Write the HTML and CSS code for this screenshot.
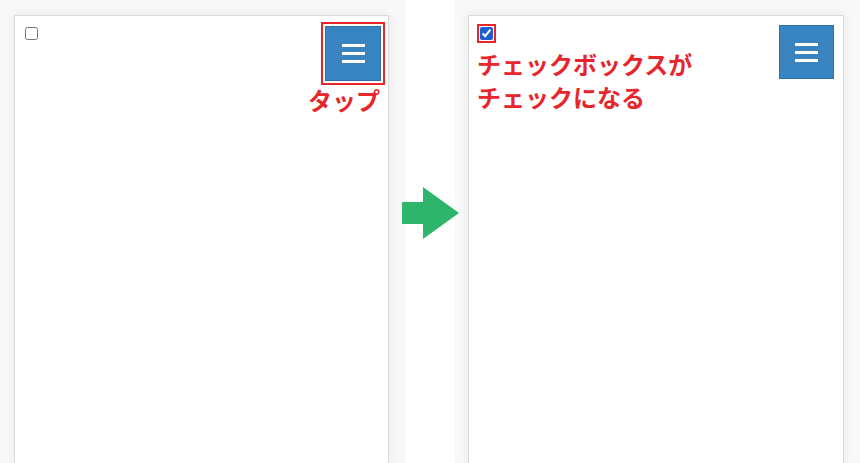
FILE: index.html
```html
<!DOCTYPE html>
<html lang="ja">
<head>
<meta charset="utf-8">
<title>チェックボックス</title>
<link rel="stylesheet" href="styles.css">
</head>
<body>
<div class="stage">
  <div class="shot shot-left">
    <div class="panel panel-left">
      <input type="checkbox" class="check">
      <div class="tap-col">
        <button class="menu-btn highlight-btn" type="button" aria-label="menu">
          <span class="bar"></span><span class="bar"></span><span class="bar"></span>
        </button>
        <div class="note note-tap">タップ</div>
      </div>
    </div>
  </div>
  <div class="gap">
    <svg class="arrow" width="62" height="56" viewBox="0 0 62 56" aria-hidden="true">
      <polygon points="2,17 23,17 23,2 59,28 23,54 23,39 2,39" fill="#2cb56b"/>
    </svg>
  </div>
  <div class="shot shot-right">
    <div class="panel panel-right">
      <div class="text-col">
        <input type="checkbox" class="check check-on highlight" checked>
        <div class="note note-done">チェックボックスが<br>チェックになる</div>
      </div>
      <button class="menu-btn" type="button" aria-label="menu">
        <span class="bar"></span><span class="bar"></span><span class="bar"></span>
      </button>
    </div>
  </div>
</div>
</body>
</html>
```

FILE: styles.css
```css
html, body {
  margin: 0;
  padding: 0;
  background: #ffffff;
}

.stage {
  display: flex;
  width: 860px;
  height: 463px;
  overflow: hidden;
  font-family: "Noto Sans CJK JP", "Noto Sans", sans-serif;
}

.shot {
  display: flex;
  box-sizing: border-box;
  height: 463px;
  background: #f8f8f8;
  padding-top: 15px;
}

.shot-left {
  width: 405px;
  padding-left: 14px;
  padding-right: 16px;
}

.shot-right {
  width: 405px;
  padding-left: 13px;
  padding-right: 16px;
}

.gap {
  width: 50px;
  position: relative;
  background: #ffffff;
}

.arrow {
  position: absolute;
  left: -5px;
  top: 185px;
  z-index: 2;
}

.panel {
  flex: 1;
  display: flex;
  justify-content: space-between;
  align-items: flex-start;
  background: #ffffff;
  border: 1px solid #dadada;
  border-bottom: none;
  box-shadow: 0 0 10px rgba(0, 0, 0, 0.07);
}

.panel-left {
  padding: 10px 7px 0 10px;
}

.panel-right {
  padding: 9px 9px 0 8px;
}

.check {
  width: 13px;
  height: 13px;
  margin: 0;
}

.panel-left .check {
  margin-top: 1px;
}

.check-on {
  margin: 2px 0 0 3px;
  accent-color: #1b5fd1;
}

.highlight {
  outline: 2px solid #e6262b;
  outline-offset: 1px;
}

.highlight-btn {
  outline: 2px solid #e6262b;
  outline-offset: 2px;
}

.tap-col {
  display: flex;
  flex-direction: column;
  align-items: flex-end;
}

.text-col {
  display: flex;
  flex-direction: column;
  align-items: flex-start;
}

.menu-btn {
  box-sizing: border-box;
  width: 56px;
  height: 55px;
  margin: 0;
  padding: 0;
  background: #3884c0;
  border: 1px solid #2d70aa;
  border-radius: 0;
  display: flex;
  flex-direction: column;
  align-items: center;
  justify-content: center;
  gap: 5px;
}

.panel-right .menu-btn {
  width: 55px;
  height: 54px;
}

.bar {
  display: block;
  width: 23px;
  height: 3px;
  background: #ffffff;
}

.note {
  color: #e6262b;
  font-weight: 700;
  font-size: 24px;
}

.note-tap {
  line-height: 29px;
  margin-top: 4px;
  margin-right: 1px;
}

.note-done {
  line-height: 33px;
  margin-top: 7px;
}
```
